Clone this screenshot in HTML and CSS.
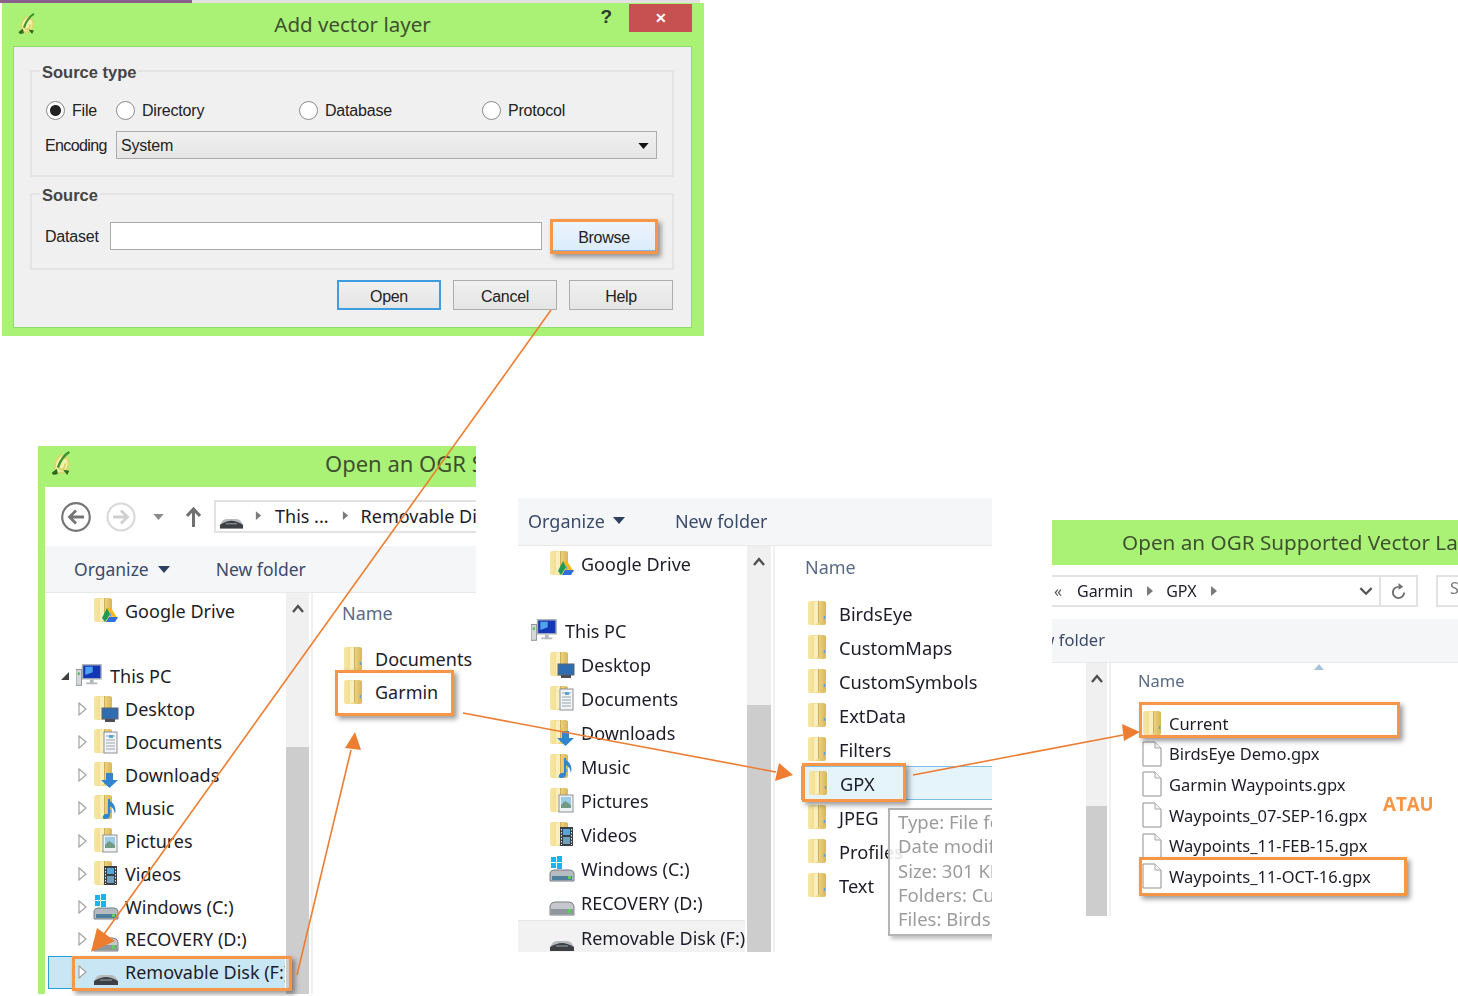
FILE: index.html
```html
<!DOCTYPE html>
<html lang="en">

<head>
    <meta charset="UTF-8">
    <title>Add vector layer - GPX steps</title>
    <link rel="stylesheet" href="styles.css">
</head>

<body>
    <svg class="defs" width="0" height="0">
        <defs>
            <linearGradient id="gold" x1="0" x2="1" y1="0" y2="0">
                <stop offset="0" stop-color="#f6e7a4" />
                <stop offset="0.45" stop-color="#f3dc8e" />
                <stop offset="1" stop-color="#d8b659" />
            </linearGradient>
            <symbol id="folder" viewBox="0 0 20 26">
                <path d="M1 3 Q1 1 3 1 H16 Q19 1 19 3 V23 Q19 25 17 25 H3 Q1 25 1 23 Z" fill="url(#gold)" />
                <path d="M7 2 L11 1 V23 L7 25 Z" fill="#f9efbe" />
                <path d="M11.5 1 V23" stroke="#cfae55" fill="none" />
                <path d="M17.5 16 V19" stroke="#58a6d8" stroke-width="1.5" fill="none" />
            </symbol>
            <symbol id="gdrive" viewBox="0 0 26 28">
                <use href="#folder" width="20" height="26" />
                <path d="M14 11 L18 11 L25 22 H21 Z" fill="#f6b91c" />
                <path d="M14 11 L17 17 L12 25 L9 21 Z" fill="#1f9a52" />
                <path d="M13 25 L16 20 H25 L22 25 Z" fill="#2f6fdc" />
            </symbol>
            <symbol id="desktop" viewBox="0 0 26 28">
                <use href="#folder" width="20" height="26" />
                <rect x="9" y="13" width="16" height="11" fill="#2f6db0" stroke="#5c6670" />
                <rect x="12" y="24" width="10" height="3" fill="#4a4f55" />
            </symbol>
            <symbol id="documents" viewBox="0 0 26 28">
                <use href="#folder" width="20" height="26" />
                <rect x="11" y="4" width="13" height="21" fill="#f2f4f6" stroke="#8d9297" />
                <path d="M13 8 H22 M13 12 H22 M13 15 H22 M13 18 H22 M13 21 H22" stroke="#9aa4ad" fill="none" />
                <rect x="16" y="7" width="4" height="3" fill="#58a6d8" />
            </symbol>
            <symbol id="downloads" viewBox="0 0 26 28">
                <use href="#folder" width="20" height="26" />
                <path d="M13 12 H20 V19 H25 L16.5 27 L8 19 H13 Z" fill="#2f86d0" />
            </symbol>
            <symbol id="music" viewBox="0 0 26 28">
                <use href="#folder" width="20" height="26" />
                <path d="M17 5 V21 Q17 25 12 25 Q9 25 10 22 Q12 19 15 20 V5 Z M17 7 Q24 11 22 20 Q21 14 17 12 Z" fill="#2f86d0" />
            </symbol>
            <symbol id="pictures" viewBox="0 0 26 28">
                <use href="#folder" width="20" height="26" />
                <rect x="10" y="8" width="14" height="17" fill="#eef1f3" stroke="#8d9297" />
                <rect x="12" y="10" width="10" height="8" fill="#9ccbe6" />
                <path d="M12 18 L16 14 L22 18 V21 H12 Z" fill="#6f9a84" />
            </symbol>
            <symbol id="videos" viewBox="0 0 26 28">
                <use href="#folder" width="20" height="26" />
                <rect x="11" y="6" width="13" height="19" fill="#3a3f45" />
                <rect x="14" y="8" width="7" height="6" fill="#58a6d8" />
                <rect x="14" y="16" width="7" height="7" fill="#6fa0b8" />
                <path d="M12.5 8 V24 M22.5 8 V24" stroke="#e6e6e6" stroke-dasharray="1.5 1.5" fill="none" />
            </symbol>
            <symbol id="windrive" viewBox="0 0 26 28">
                <path d="M1 18 Q2 15 5 15 H21 Q24 15 25 18 V26 H1 Z" fill="#b4bcc2" stroke="#767d83" />
                <rect x="3" y="21" width="20" height="4" fill="#4d7f9b" />
                <rect x="19" y="21" width="3" height="3" fill="#5bd05b" />
                <path d="M2 2 H7 V7 H2 Z M8 1 H13 V7 H8 Z M2 8 H7 V13 H2 Z M8 8 H13 V14 H8 Z" fill="#18b4f0" />
            </symbol>
            <symbol id="drive" viewBox="0 0 26 28">
                <path d="M1 17 Q2 13 6 13 H20 Q24 13 25 17 V26 H1 Z" fill="#c4c8cc" stroke="#7a7f84" />
                <rect x="2" y="20" width="22" height="5" fill="#8f979d" />
                <rect x="19" y="20" width="3" height="4" fill="#5bd05b" />
            </symbol>
            <symbol id="removable" viewBox="0 0 26 28">
                <path d="M1 24 Q3 17 8 17 H18 Q23 17 25 24 V27 H1 Z" fill="#b6babd" />
                <path d="M1 23 Q8 19 13 19 Q18 19 25 23 V27 H1 Z" fill="#3d4044" />
                <path d="M7 22 H19" stroke="#7d8388" stroke-width="1.5" fill="none" />
            </symbol>
            <symbol id="pc" viewBox="0 0 28 26">
                <rect x="0" y="6" width="6" height="17" fill="#d5d8da" stroke="#8b9094" />
                <rect x="2" y="9" width="2" height="3" fill="#46c246" />
                <rect x="7" y="1" width="20" height="15" fill="#1437b8" stroke="#a7adb2" stroke-width="1.5" />
                <path d="M10 3 H18 V9 L10 12 Z" fill="#4fa2ec" />
                <path d="M15 17 H19 V20 H23 V22 H11 V20 H15 Z" fill="#b3b8bc" />
            </symbol>
            <symbol id="file" viewBox="0 0 20 26">
                <path d="M1 1 H13 L19 7 V25 H1 Z" fill="#fff" stroke="#8f8f8f" />
                <path d="M13 1 V7 H19" fill="#f2f2f2" stroke="#a8a8a8" />
            </symbol>
            <symbol id="qgis" viewBox="0 0 20 24">
                <path d="M11 3 Q3 7 3 15 Q3 21 9 21 Q15 21 16 14 Q17 9 14 6 Q8 8 7 15 Q7 18 10 18 Q13 17 13 12" fill="#eef3a8" stroke="#d8d86e" stroke-width="2" />
                <path d="M17 1 Q10 5 6 16" fill="none" stroke="#3d8f2f" stroke-width="2.2" />
                <path d="M0 21 L5 17 L6 22 L2 23 Z M11 18 L15 23 L17 19 Z" fill="#2e6a22" />
            </symbol>
            <symbol id="tw" viewBox="0 0 9 14">
                <path d="M1 1 L8 7 L1 13 Z" fill="#fff" stroke="#a3a3a3" stroke-width="1.2" />
            </symbol>
            <symbol id="tw-open" viewBox="0 0 9 14">
                <path d="M8 3 V11 H0 Z" fill="#404040" />
            </symbol>
            <symbol id="chev" viewBox="0 0 8 12">
                <path d="M1 1 L7 6 L1 11 Z" fill="#7a7a7a" />
            </symbol>
            <symbol id="up-chev" viewBox="0 0 12 9">
                <path d="M1 8 L6 2 L11 8" fill="none" stroke="#505050" stroke-width="2.4" />
            </symbol>
            <symbol id="caret" viewBox="0 0 12 7">
                <path d="M0 0 H12 L6 7 Z" fill="currentColor" />
            </symbol>
            <symbol id="nav-back" viewBox="0 0 30 30">
                <circle cx="15" cy="15" r="13.8" fill="#fff" stroke="#757575" stroke-width="2.2" />
                <path d="M23 15 H9 M15 8.5 L8.5 15 L15 21.5" fill="none" stroke="#757575" stroke-width="2.8" />
            </symbol>
            <symbol id="nav-forward" viewBox="0 0 30 30">
                <circle cx="15" cy="15" r="13.5" fill="#fff" stroke="#d8d8d8" stroke-width="2" />
                <path d="M7 15 H21 M15 8.5 L21.5 15 L15 21.5" fill="none" stroke="#cfcfcf" stroke-width="2.8" />
            </symbol>
            <symbol id="nav-up" viewBox="0 0 15 20">
                <path d="M7.5 20 V3 M1 9 L7.5 2 L14 9" fill="none" stroke="#707070" stroke-width="3" />
            </symbol>
        </defs>
    </svg>

    <div class="canvas">
        <div class="top-strip"></div>

        <!-- Step 1: the QGIS dialog -->
        <section class="dialog">
            <header class="dialog-title">
                <svg class="qgis-logo"><use href="#qgis" /></svg>
                <h1>Add vector layer</h1>
                <span class="help-mark">?</span>
                <button class="close-btn">&#10005;</button>
            </header>
            <div class="dialog-panel">
                <fieldset class="group">
                    <legend>Source type</legend>
                    <div class="radio-row">
                        <label><input type="radio" name="src" checked><span>File</span></label>
                        <label><input type="radio" name="src"><span>Directory</span></label>
                        <label><input type="radio" name="src"><span>Database</span></label>
                        <label><input type="radio" name="src"><span>Protocol</span></label>
                    </div>
                    <div class="encoding-row">
                        <span class="encoding-label">Encoding</span>
                        <div class="combo">System <svg class="combo-caret"><use href="#caret" /></svg></div>
                    </div>
                </fieldset>
                <fieldset class="group group-source">
                    <legend>Source</legend>
                    <div class="dataset-row">
                        <span class="dataset-label">Dataset</span>
                        <input class="dataset-input" type="text">
                        <button class="btn btn-browse">Browse</button>
                    </div>
                </fieldset>
                <div class="dialog-actions">
                    <button class="btn btn-default">Open</button>
                    <button class="btn">Cancel</button>
                    <button class="btn">Help</button>
                </div>
            </div>
        </section>

        <!-- Step 2: open dialog, drive list -->
        <section class="win win-a">
            <header class="win-title">
                <svg class="qgis-logo qgis-big"><use href="#qgis" /></svg>
                <h2>Open an OGR Supported Vector Layer</h2>
            </header>
            <div class="win-main">
                <nav class="nav-bar">
                    <svg class="nav-btn"><use href="#nav-back" /></svg>
                    <svg class="nav-btn"><use href="#nav-forward" /></svg>
                    <svg class="nav-drop"><use href="#caret" /></svg>
                    <svg class="nav-up"><use href="#nav-up" /></svg>
                    <div class="address">
                        <svg class="addr-drive"><use href="#removable" /></svg>
                        <svg class="chev"><use href="#chev" /></svg>
                        <span>This ...</span>
                        <svg class="chev"><use href="#chev" /></svg>
                        <span>Removable Disk (F:)</span>
                    </div>
                </nav>
                <div class="toolbar"><span>Organize</span><svg class="tool-caret"><use href="#caret" /></svg><span class="new-folder">New folder</span></div>
                <div class="panes">
                    <div class="tree">
                        <div class="row row-plain"><svg class="ico"><use href="#gdrive" /></svg><span>Google Drive</span></div>
                        <div class="row-gap"></div>
                        <div class="row row-pc"><svg class="tw"><use href="#tw-open" /></svg><svg class="ico ico-pc"><use href="#pc" /></svg><span>This PC</span></div>
                        <div class="row"><svg class="tw"><use href="#tw" /></svg><svg class="ico"><use href="#desktop" /></svg><span>Desktop</span></div>
                        <div class="row"><svg class="tw"><use href="#tw" /></svg><svg class="ico"><use href="#documents" /></svg><span>Documents</span></div>
                        <div class="row"><svg class="tw"><use href="#tw" /></svg><svg class="ico"><use href="#downloads" /></svg><span>Downloads</span></div>
                        <div class="row"><svg class="tw"><use href="#tw" /></svg><svg class="ico"><use href="#music" /></svg><span>Music</span></div>
                        <div class="row"><svg class="tw"><use href="#tw" /></svg><svg class="ico"><use href="#pictures" /></svg><span>Pictures</span></div>
                        <div class="row"><svg class="tw"><use href="#tw" /></svg><svg class="ico"><use href="#videos" /></svg><span>Videos</span></div>
                        <div class="row"><svg class="tw"><use href="#tw" /></svg><svg class="ico"><use href="#windrive" /></svg><span>Windows (C:)</span></div>
                        <div class="row"><svg class="tw"><use href="#tw" /></svg><svg class="ico"><use href="#drive" /></svg><span>RECOVERY (D:)</span></div>
                        <div class="row row-sel"><svg class="tw"><use href="#tw" /></svg><svg class="ico"><use href="#removable" /></svg><span>Removable Disk (F:)</span></div>
                    </div>
                    <div class="scroll scroll-a">
                        <svg class="scroll-up"><use href="#up-chev" /></svg>
                        <div class="scroll-thumb"></div>
                    </div>
                    <div class="list">
                        <div class="list-head">Name</div>
                        <div class="list-row"><svg class="list-ico"><use href="#folder" /></svg><span>Documents</span></div>
                        <div class="list-row"><svg class="list-ico"><use href="#folder" /></svg><span>Garmin</span></div>
                    </div>
                </div>
            </div>
        </section>

        <!-- Step 3: inside Garmin -->
        <section class="win win-b">
            <div class="toolbar"><span>Organize</span><svg class="tool-caret"><use href="#caret" /></svg><span class="new-folder">New folder</span></div>
            <div class="panes">
                <div class="tree">
                    <div class="row row-plain"><svg class="ico"><use href="#gdrive" /></svg><span>Google Drive</span></div>
                    <div class="row-gap"></div>
                    <div class="row row-pc"><svg class="ico ico-pc"><use href="#pc" /></svg><span>This PC</span></div>
                    <div class="row"><svg class="ico"><use href="#desktop" /></svg><span>Desktop</span></div>
                    <div class="row"><svg class="ico"><use href="#documents" /></svg><span>Documents</span></div>
                    <div class="row"><svg class="ico"><use href="#downloads" /></svg><span>Downloads</span></div>
                    <div class="row"><svg class="ico"><use href="#music" /></svg><span>Music</span></div>
                    <div class="row"><svg class="ico"><use href="#pictures" /></svg><span>Pictures</span></div>
                    <div class="row"><svg class="ico"><use href="#videos" /></svg><span>Videos</span></div>
                    <div class="row"><svg class="ico"><use href="#windrive" /></svg><span>Windows (C:)</span></div>
                    <div class="row"><svg class="ico"><use href="#drive" /></svg><span>RECOVERY (D:)</span></div>
                    <div class="row row-hover"><svg class="ico"><use href="#removable" /></svg><span>Removable Disk (F:)</span></div>
                </div>
                <div class="scroll scroll-b">
                    <svg class="scroll-up"><use href="#up-chev" /></svg>
                    <div class="scroll-thumb"></div>
                </div>
                <div class="list">
                    <div class="list-head">Name</div>
                    <div class="list-row"><svg class="list-ico"><use href="#folder" /></svg><span>BirdsEye</span></div>
                    <div class="list-row"><svg class="list-ico"><use href="#folder" /></svg><span>CustomMaps</span></div>
                    <div class="list-row"><svg class="list-ico"><use href="#folder" /></svg><span>CustomSymbols</span></div>
                    <div class="list-row"><svg class="list-ico"><use href="#folder" /></svg><span>ExtData</span></div>
                    <div class="list-row"><svg class="list-ico"><use href="#folder" /></svg><span>Filters</span></div>
                    <div class="list-row list-row-sel"><svg class="list-ico"><use href="#folder" /></svg><span>GPX</span></div>
                    <div class="list-row"><svg class="list-ico"><use href="#folder" /></svg><span>JPEG</span></div>
                    <div class="list-row"><svg class="list-ico"><use href="#folder" /></svg><span>Profiles</span></div>
                    <div class="list-row"><svg class="list-ico"><use href="#folder" /></svg><span>Text</span></div>
                </div>
            </div>
            <div class="tooltip">
                <div>Type: File folder</div>
                <div>Date modified: 11/10/2016</div>
                <div>Size: 301 KB</div>
                <div>Folders: Current</div>
                <div>Files: BirdsEye Demo.gpx</div>
            </div>
        </section>

        <!-- Step 4: inside GPX -->
        <section class="win win-c">
            <header class="win-title"><h2>Open an OGR Supported Vector Layer</h2></header>
            <div class="addr-row">
                <div class="address address-c">
                    <span class="addr-back">&laquo;</span>
                    <span>Garmin</span>
                    <svg class="chev"><use href="#chev" /></svg>
                    <span>GPX</span>
                    <svg class="chev"><use href="#chev" /></svg>
                    <svg class="addr-v" viewBox="0 0 12 8"><path d="M1 1 L6 6 L11 1" fill="none" stroke="#555" stroke-width="2" /></svg>
                    <span class="addr-refresh"><svg viewBox="0 0 16 18"><path d="M8 4 A6 6 0 1 0 14 10" fill="none" stroke="#6e6e6e" stroke-width="2" /><path d="M8 0 L13 4 L8 7 Z" fill="#6e6e6e" /></svg></span>
                </div>
                <div class="search-box">Search</div>
            </div>
            <div class="toolbar toolbar-c"><span>New folder</span></div>
            <div class="panes">
                <div class="tree-stub"></div>
                <div class="scroll scroll-c">
                    <svg class="scroll-up"><use href="#up-chev" /></svg>
                    <div class="scroll-thumb"></div>
                </div>
                <div class="list">
                    <svg class="sort-mark" viewBox="0 0 10 6"><path d="M0 6 L5 0 L10 6 Z" fill="#a7c3dc" /></svg>
                    <div class="list-head">Name</div>
                    <div class="list-row"><svg class="list-ico"><use href="#folder" /></svg><span>Current</span></div>
                    <div class="list-row"><svg class="list-ico"><use href="#file" /></svg><span>BirdsEye Demo.gpx</span></div>
                    <div class="list-row"><svg class="list-ico"><use href="#file" /></svg><span>Garmin Waypoints.gpx</span></div>
                    <div class="list-row"><svg class="list-ico"><use href="#file" /></svg><span>Waypoints_07-SEP-16.gpx</span></div>
                    <div class="list-row"><svg class="list-ico"><use href="#file" /></svg><span>Waypoints_11-FEB-15.gpx</span></div>
                    <div class="list-row"><svg class="list-ico"><use href="#file" /></svg><span>Waypoints_11-OCT-16.gpx</span></div>
                </div>
            </div>
        </section>

        <!-- Annotations over the screenshots -->
        <div class="mark mark-browse"></div>
        <div class="mark mark-disk"></div>
        <div class="mark mark-garmin"></div>
        <div class="mark mark-gpx"></div>
        <div class="mark mark-current"></div>
        <div class="mark mark-oct"></div>
        <div class="atau">ATAU</div>

        <svg class="arrows" viewBox="0 0 1458 996">
            <g stroke="#ed7d31" stroke-width="1.6" fill="none">
                <path d="M551 310 L102 937" />
                <path d="M297 975 L351 750" />
                <path d="M463 713 L776 772" />
                <path d="M913 775 L1123 735" />
            </g>
            <g fill="#ed7d31">
                <path d="M91 952 L97 928 L115 941 Z" />
                <path d="M355 732 L361 750 L345 748 Z" />
                <path d="M793 775 L775 781 L779 763 Z" />
                <path d="M1140 732 L1124 741 L1122 724 Z" />
            </g>
        </svg>
    </div>
</body>

</html>
```

FILE: styles.css
```css
* {
    box-sizing: border-box;
}

body {
    margin: 0;
    background-color: #fff;
    font-family: "Noto Sans", "Open Sans", sans-serif;
    color: #1c1c28;
}

.defs {
    position: absolute;
}

/* the source picture is a soft, upscaled screenshot */
.canvas {
    position: relative;
    width: 1458px;
    height: 996px;
    overflow: hidden;
    filter: blur(0.4px);
}

.top-strip {
    position: absolute;
    left: 0;
    top: 0;
    width: 700px;
    height: 3px;
    background: linear-gradient(to right, #8b5f8b 192px, #e2e2e2 192px);
}

/* Add vector layer dialog */
.dialog {
    position: absolute;
    left: 2px;
    top: 3px;
    width: 702px;
    height: 333px;
    background-color: #a9f275;
    padding: 0 12px 8px 11px;
    display: flex;
    flex-direction: column;
    font-family: "Liberation Sans", sans-serif;
    font-size: 16px;
    letter-spacing: -0.2px;
    color: #222;
}

.dialog-title {
    position: relative;
    height: 43px;
    display: flex;
    align-items: center;
    justify-content: center;
    flex-shrink: 0;
}

.dialog-title h1 {
    margin: 0 0 1px 0;
    font-family: "Noto Sans", sans-serif;
    font-size: 20.5px;
    font-weight: 400;
    letter-spacing: 0;
    color: #3f5030;
}

.qgis-logo {
    position: absolute;
    left: 5px;
    top: 10px;
    width: 19px;
    height: 22px;
}

.help-mark {
    position: absolute;
    right: 80px;
    top: 3px;
    font-size: 19px;
    font-weight: 700;
    color: #2c3a2a;
}

.close-btn {
    position: absolute;
    right: 0;
    top: 1px;
    width: 63px;
    height: 28px;
    border: none;
    background-color: #c75050;
    color: #fff;
    font-size: 14px;
    font-weight: 700;
}

.dialog-panel {
    flex: 1;
    background-color: #f0f0f0;
    border: 1px solid #8fdc6a;
    display: flex;
    flex-direction: column;
}

.group {
    margin: 14px 17px 0 16px;
    padding: 16px 15px 16px 14px;
    border: 2px solid #e4e4e4;
    min-width: 0;
}

.group legend {
    margin-left: -6px;
    padding: 0 2px;
    height: 20px;
    line-height: 22px;
    font-weight: 700;
    font-size: 16.5px;
    letter-spacing: 0;
    color: #454545;
}

.group-source {
    margin-top: 7px;
    padding: 17px 16px 17px 14px;
}

.radio-row {
    display: grid;
    grid-template-columns: 70px 183px 183px auto;
    height: 26px;
    align-items: center;
}

.radio-row label {
    display: flex;
    align-items: center;
    gap: 7px;
}

.radio-row span {
    padding-top: 2px;
}

.radio-row input {
    appearance: none;
    margin: 0;
    width: 19px;
    height: 19px;
    border-radius: 50%;
    border: 1px solid #8a8a8a;
    background-color: #fff;
}

.radio-row input:checked {
    background: radial-gradient(circle, #222 5px, #fff 6px);
}

.encoding-row {
    display: flex;
    align-items: center;
    margin-top: 8px;
}

.encoding-label {
    width: 71px;
    margin-left: -1px;
    padding-top: 2px;
    letter-spacing: -0.6px;
}

.combo {
    flex: 1;
    height: 28px;
    padding: 2px 0 0 4px;
    display: flex;
    align-items: center;
    justify-content: space-between;
    border: 1px solid #acacac;
    background: linear-gradient(#f0f0f0, #e5e5e5);
}

.combo-caret {
    width: 11px;
    height: 6px;
    margin-right: 7px;
    color: #111;
}

.dataset-row {
    display: flex;
    align-items: center;
    height: 30px;
    margin-left: -1px;
}

.dataset-label {
    width: 65px;
    padding-top: 2px;
}

.dataset-input {
    width: 432px;
    height: 28px;
    border: 1px solid #aaa;
    background-color: #fff;
}

.btn {
    width: 104px;
    height: 30px;
    padding: 3px 0 0;
    border: 1px solid #adadad;
    background: linear-gradient(#f0f0f0, #e5e5e5);
    font-family: "Liberation Sans", sans-serif;
    font-size: 16px;
    letter-spacing: -0.3px;
    color: #222;
}

.btn-browse {
    margin-left: 10px;
    background: linear-gradient(#ecf4fc, #dcecfc);
    border-color: #7eb4ea;
}

.btn-default {
    border: 2px solid #3c9ee0;
}

.dialog-actions {
    display: flex;
    justify-content: flex-end;
    gap: 12px;
    margin: 10px 18px 0 0;
}

/* Explorer style windows */
.win {
    position: absolute;
    overflow: hidden;
    background-color: #fff;
    display: flex;
    flex-direction: column;
    font-size: 18px;
}

.win-a {
    left: 38px;
    top: 446px;
    width: 438px;
    height: 548px;
    background-color: #a9f275;
}

.win-b {
    left: 518px;
    top: 498px;
    width: 474px;
    height: 454px;
}

.win-c {
    left: 1052px;
    top: 520px;
    width: 406px;
    height: 396px;
    font-size: 16.5px;
}

.win-title {
    position: relative;
    flex-shrink: 0;
    height: 41px;
    background-color: #a9f275;
    padding: 0 0 7px 287px;
    display: flex;
    align-items: center;
    white-space: nowrap;
}

.win-title h2 {
    margin: 0;
    font-size: 22px;
    font-weight: 400;
    color: #3f5030;
}

.qgis-big {
    left: 13px;
    top: 5px;
    width: 22px;
    height: 25px;
}

.win-main {
    flex: 1;
    min-height: 0;
    margin-left: 7px;
    background-color: #fff;
    display: flex;
    flex-direction: column;
}

.nav-bar {
    flex-shrink: 0;
    height: 59px;
    padding-left: 16px;
    display: flex;
    align-items: center;
    white-space: nowrap;
}

.nav-btn {
    width: 30px;
    height: 30px;
    flex-shrink: 0;
    margin-right: 15px;
}

.nav-drop {
    width: 11px;
    height: 6px;
    flex-shrink: 0;
    margin-left: 2px;
    color: #8a8a8a;
}

.nav-up {
    width: 15px;
    height: 20px;
    flex-shrink: 0;
    margin-left: 22px;
}

.address {
    flex: 1;
    min-width: 0;
    height: 33px;
    margin-left: 13px;
    padding: 0 0 2px 3px;
    display: flex;
    align-items: center;
    border: 2px solid #e2e2e2;
    border-right: none;
    white-space: nowrap;
}

.addr-drive {
    width: 25px;
    height: 28px;
    flex-shrink: 0;
    margin-right: 11px;
}

.chev {
    width: 7px;
    height: 11px;
    margin: 0 13px 0 0;
    flex-shrink: 0;
}

.address span + .chev {
    margin: 0 12px 0 13px;
}

.toolbar {
    flex-shrink: 0;
    height: 47px;
    padding-left: 29px;
    display: flex;
    align-items: center;
    background-color: #f5f6f7;
    border-bottom: 1px solid #e8e8e8;
    color: #3c4a6b;
    white-space: nowrap;
    overflow: hidden;
}

.win-a .toolbar {
    font-size: 17.5px;
}

.win-a .new-folder {
    margin-left: 46px;
}

.win-b .toolbar {
    height: 48px;
    padding: 0 0 2px 10px;
}

.win-b .tool-caret {
    margin-left: 8px;
}

.win-b .new-folder {
    margin-left: 50px;
}

.tool-caret {
    width: 12px;
    height: 7px;
    margin-left: 9px;
    color: #2e4060;
}

.new-folder {
    margin-left: 48px;
}

.panes {
    flex: 1;
    min-height: 0;
    display: flex;
}

.tree {
    width: 241px;
    flex-shrink: 0;
    padding-top: 2px;
}

.row {
    height: 32.9px;
    padding-left: 33px;
    display: flex;
    align-items: center;
    white-space: nowrap;
    overflow: hidden;
}

.row-gap {
    height: 32px;
}

.tw {
    width: 9px;
    height: 14px;
    flex-shrink: 0;
    margin-right: 6px;
}

.ico {
    width: 26px;
    height: 28px;
    flex-shrink: 0;
    margin-right: 6px;
}

.row-plain {
    padding-left: 48px;
}

.row-pc {
    padding-left: 16px;
}

.row-pc .ico-pc {
    margin-right: 8px;
}

.row-sel {
    margin: 0 1px 0 3px;
    padding-left: 29px;
    background-color: #c9e6f5;
    border: 1px solid #26a0da;
    border-right: none;
}

.scroll {
    flex-shrink: 0;
    width: 23px;
    background-color: #f0f0f0;
    display: flex;
    flex-direction: column;
    align-items: center;
}

.scroll-up {
    width: 12px;
    height: 9px;
    margin-top: 11px;
    flex-shrink: 0;
}

.scroll-thumb {
    width: 100%;
    margin-top: auto;
    background-color: #cdcdcd;
}

.scroll-a .scroll-thumb {
    height: 247px;
}

.list {
    position: relative;
    flex: 1;
    min-width: 0;
    border-left: 2px solid #f0f0f0;
    margin-left: 2px;
    padding-left: 29px;
    white-space: nowrap;
}

.list-head {
    height: 49px;
    padding-top: 7px;
    color: #5a6b85;
    line-height: 26px;
}

.win-a .list-row {
    height: 33px;
}

.list-row {
    display: flex;
    align-items: center;
    height: 34px;
    margin-left: 1px;
}

.list-ico {
    width: 20px;
    height: 26px;
    flex-shrink: 0;
    margin-right: 12px;
}

/* Window b: nudged tree and list */
.win-b .tree {
    width: 229px;
    padding-top: 1px;
}

.win-b .row {
    height: 34px;
    padding-left: 31px;
}

.win-b .row-plain {
    padding-left: 31px;
}

.win-b .row-pc {
    padding-left: 13px;
}

.win-b .row-gap {
    height: 33px;
}

.win-b .row-hover {
    margin-right: 2px;
    background-color: #f2f2f2;
    border-top: 1px solid #e6e6e6;
}

.win-b .scroll {
    width: 24px;
}

.scroll-b .scroll-thumb {
    height: 247px;
}

.win-b .list {
    padding-left: 31px;
    font-size: 18.3px;
}

.win-b .list-head {
    height: 50px;
    padding-top: 8px;
    margin-left: -1px;
    font-size: 18px;
}

.win-b .list-row-sel {
    margin-left: -5px;
    padding-left: 6px;
    background-color: #e5f3fb;
    border: 1px solid #7cc0e8;
    border-right: none;
}

.tooltip {
    position: absolute;
    left: 370px;
    top: 310px;
    width: 130px;
    height: 128px;
    padding: 0 0 0 8px;
    background-color: rgba(255, 255, 255, 0.88);
    border: 2px solid #b4b4b4;
    box-shadow: 3px 3px 4px rgba(0, 0, 0, 0.25);
    color: #9c9c9c;
    font-size: 18.5px;
    line-height: 24.3px;
    white-space: nowrap;
}

.win-c .win-title {
    height: 45px;
    padding: 0 0 2px 70px;
}

.win-c .win-title h2 {
    font-size: 20.7px;
}

.addr-row {
    flex-shrink: 0;
    height: 54px;
    padding-top: 10px;
    display: flex;
    gap: 18px;
    font-size: 16px;
}

.address-c {
    flex: none;
    width: 366px;
    height: 32px;
    margin: 0;
    padding: 0 0 0 2px;
    border: 2px solid #e2e2e2;
    border-left: none;
}

.addr-back {
    width: 23px;
    color: #555;
}

.address-c .chev {
    width: 8px;
    height: 12px;
    margin: 0 12px 0 14px;
}

.addr-v {
    width: 14px;
    height: 9px;
    margin-left: auto;
    margin-right: 6px;
}

.addr-refresh {
    width: 37px;
    height: 28px;
    border-left: 2px solid #e2e2e2;
    display: flex;
    align-items: center;
    justify-content: center;
}

.addr-refresh svg {
    width: 15px;
    height: 17px;
}

.search-box {
    flex: 1;
    height: 32px;
    padding-left: 12px;
    border: 2px solid #e2e2e2;
    border-right: none;
    color: #777;
    overflow: hidden;
    white-space: nowrap;
}

.toolbar-c {
    height: 44px;
    padding-left: 0;
}

.toolbar-c span {
    margin-left: -32px;
    padding-bottom: 2px;
}

.tree-stub {
    width: 34px;
    flex-shrink: 0;
}

.scroll-c {
    width: 21px;
}

.scroll-c .scroll-thumb {
    height: 110px;
}

.win-c .list {
    padding-left: 27px;
}

.win-c .list-head {
    height: 45px;
    padding-top: 5px;
}

.win-c .list-row {
    height: 30.6px;
    margin-left: 4px;
}

.win-c .list-ico {
    margin-right: 7px;
}

.sort-mark {
    position: absolute;
    left: 203px;
    top: 1px;
    width: 10px;
    height: 6px;
}

/* Orange call-out boxes */
.mark {
    position: absolute;
    border: 3px solid #f79646;
    box-shadow: 3px 3px 5px rgba(0, 0, 0, 0.4);
}

.mark-browse {
    left: 550px;
    top: 219px;
    width: 108px;
    height: 35px;
}

.mark-disk {
    left: 72px;
    top: 956px;
    width: 220px;
    height: 35px;
}

.mark-garmin {
    left: 335px;
    top: 670px;
    width: 119px;
    height: 46px;
}

.mark-gpx {
    left: 802px;
    top: 763px;
    width: 104px;
    height: 39px;
}

.mark-current {
    left: 1139px;
    top: 702px;
    width: 261px;
    height: 36px;
}

.mark-oct {
    left: 1139px;
    top: 857px;
    width: 268px;
    height: 39px;
}

.atau {
    position: absolute;
    left: 1383px;
    top: 793px;
    font-family: "Open Sans", sans-serif;
    font-size: 18.7px;
    font-weight: 700;
    line-height: 22px;
    color: #f79646;
}

.arrows {
    position: absolute;
    left: 0;
    top: 0;
    width: 1458px;
    height: 996px;
    pointer-events: none;
}
```
